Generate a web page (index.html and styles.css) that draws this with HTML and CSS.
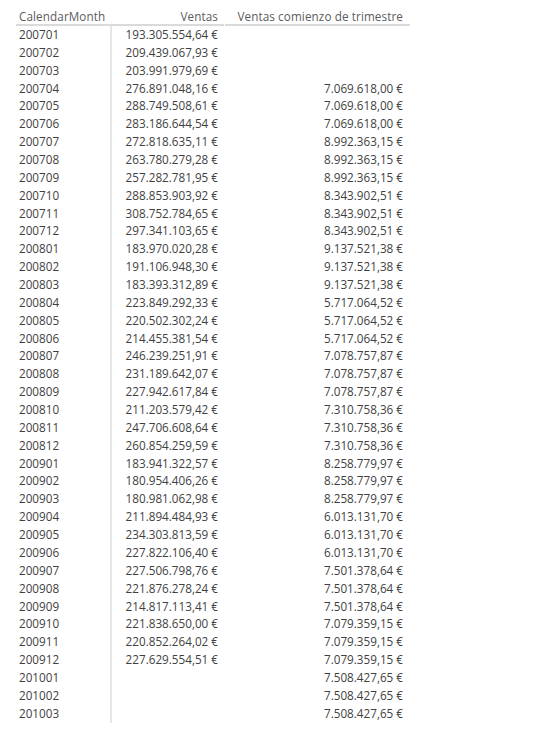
FILE: index.html
```html
<!DOCTYPE html>
<html lang="es">
<head>
    <meta charset="UTF-8">
    <title>Ventas por mes</title>
    <link rel="stylesheet" href="styles.css">
</head>
<body>
    <div class="sales-table">
        <div class="row head">
            <div class="cell month">CalendarMonth</div>
            <div class="cell num">Ventas</div>
            <div class="cell num quarter">Ventas comienzo de trimestre</div>
        </div>

        <div class="rows">
        <div class="row"><div class="cell month">200701</div><div class="cell num">193.305.554,64 €</div><div class="cell num quarter"></div></div>
        <div class="row"><div class="cell month">200702</div><div class="cell num">209.439.067,93 €</div><div class="cell num quarter"></div></div>
        <div class="row"><div class="cell month">200703</div><div class="cell num">203.991.979,69 €</div><div class="cell num quarter"></div></div>
        <div class="row"><div class="cell month">200704</div><div class="cell num">276.891.048,16 €</div><div class="cell num quarter">7.069.618,00 €</div></div>
        <div class="row"><div class="cell month">200705</div><div class="cell num">288.749.508,61 €</div><div class="cell num quarter">7.069.618,00 €</div></div>
        <div class="row"><div class="cell month">200706</div><div class="cell num">283.186.644,54 €</div><div class="cell num quarter">7.069.618,00 €</div></div>
        <div class="row"><div class="cell month">200707</div><div class="cell num">272.818.635,11 €</div><div class="cell num quarter">8.992.363,15 €</div></div>
        <div class="row"><div class="cell month">200708</div><div class="cell num">263.780.279,28 €</div><div class="cell num quarter">8.992.363,15 €</div></div>
        <div class="row"><div class="cell month">200709</div><div class="cell num">257.282.781,95 €</div><div class="cell num quarter">8.992.363,15 €</div></div>
        <div class="row"><div class="cell month">200710</div><div class="cell num">288.853.903,92 €</div><div class="cell num quarter">8.343.902,51 €</div></div>
        <div class="row"><div class="cell month">200711</div><div class="cell num">308.752.784,65 €</div><div class="cell num quarter">8.343.902,51 €</div></div>
        <div class="row"><div class="cell month">200712</div><div class="cell num">297.341.103,65 €</div><div class="cell num quarter">8.343.902,51 €</div></div>
        <div class="row"><div class="cell month">200801</div><div class="cell num">183.970.020,28 €</div><div class="cell num quarter">9.137.521,38 €</div></div>
        <div class="row"><div class="cell month">200802</div><div class="cell num">191.106.948,30 €</div><div class="cell num quarter">9.137.521,38 €</div></div>
        <div class="row"><div class="cell month">200803</div><div class="cell num">183.393.312,89 €</div><div class="cell num quarter">9.137.521,38 €</div></div>
        <div class="row"><div class="cell month">200804</div><div class="cell num">223.849.292,33 €</div><div class="cell num quarter">5.717.064,52 €</div></div>
        <div class="row"><div class="cell month">200805</div><div class="cell num">220.502.302,24 €</div><div class="cell num quarter">5.717.064,52 €</div></div>
        <div class="row"><div class="cell month">200806</div><div class="cell num">214.455.381,54 €</div><div class="cell num quarter">5.717.064,52 €</div></div>
        <div class="row"><div class="cell month">200807</div><div class="cell num">246.239.251,91 €</div><div class="cell num quarter">7.078.757,87 €</div></div>
        <div class="row"><div class="cell month">200808</div><div class="cell num">231.189.642,07 €</div><div class="cell num quarter">7.078.757,87 €</div></div>
        <div class="row"><div class="cell month">200809</div><div class="cell num">227.942.617,84 €</div><div class="cell num quarter">7.078.757,87 €</div></div>
        <div class="row"><div class="cell month">200810</div><div class="cell num">211.203.579,42 €</div><div class="cell num quarter">7.310.758,36 €</div></div>
        <div class="row"><div class="cell month">200811</div><div class="cell num">247.706.608,64 €</div><div class="cell num quarter">7.310.758,36 €</div></div>
        <div class="row"><div class="cell month">200812</div><div class="cell num">260.854.259,59 €</div><div class="cell num quarter">7.310.758,36 €</div></div>
        <div class="row"><div class="cell month">200901</div><div class="cell num">183.941.322,57 €</div><div class="cell num quarter">8.258.779,97 €</div></div>
        <div class="row"><div class="cell month">200902</div><div class="cell num">180.954.406,26 €</div><div class="cell num quarter">8.258.779,97 €</div></div>
        <div class="row"><div class="cell month">200903</div><div class="cell num">180.981.062,98 €</div><div class="cell num quarter">8.258.779,97 €</div></div>
        <div class="row"><div class="cell month">200904</div><div class="cell num">211.894.484,93 €</div><div class="cell num quarter">6.013.131,70 €</div></div>
        <div class="row"><div class="cell month">200905</div><div class="cell num">234.303.813,59 €</div><div class="cell num quarter">6.013.131,70 €</div></div>
        <div class="row"><div class="cell month">200906</div><div class="cell num">227.822.106,40 €</div><div class="cell num quarter">6.013.131,70 €</div></div>
        <div class="row"><div class="cell month">200907</div><div class="cell num">227.506.798,76 €</div><div class="cell num quarter">7.501.378,64 €</div></div>
        <div class="row"><div class="cell month">200908</div><div class="cell num">221.876.278,24 €</div><div class="cell num quarter">7.501.378,64 €</div></div>
        <div class="row"><div class="cell month">200909</div><div class="cell num">214.817.113,41 €</div><div class="cell num quarter">7.501.378,64 €</div></div>
        <div class="row"><div class="cell month">200910</div><div class="cell num">221.838.650,00 €</div><div class="cell num quarter">7.079.359,15 €</div></div>
        <div class="row"><div class="cell month">200911</div><div class="cell num">220.852.264,02 €</div><div class="cell num quarter">7.079.359,15 €</div></div>
        <div class="row"><div class="cell month">200912</div><div class="cell num">227.629.554,51 €</div><div class="cell num quarter">7.079.359,15 €</div></div>
        <div class="row"><div class="cell month">201001</div><div class="cell num"></div><div class="cell num quarter">7.508.427,65 €</div></div>
        <div class="row"><div class="cell month">201002</div><div class="cell num"></div><div class="cell num quarter">7.508.427,65 €</div></div>
        <div class="row"><div class="cell month">201003</div><div class="cell num"></div><div class="cell num quarter">7.508.427,65 €</div></div>
        </div>
    </div>
</body>
</html>
```

FILE: styles.css
```css
body {
    margin: 0;
    padding: 8px 0 0 16px;
    background: #ffffff;
    font-family: 'Open Sans', sans-serif;
    font-size: 11.7px;
    color: #3f3f3f;
}

.sales-table {
    width: 394px;
}

.rows {
    padding-top: 2px;
}

.rows .month {
    border-right: 2px solid #e6e6e6;
}

.row {
    display: grid;
    grid-template-columns: 96px 112px 186px;
    height: 17.86px;
    line-height: 17.86px;
}

.cell {
    white-space: nowrap;
}

.month {
    padding-left: 3px;
}

.num {
    text-align: right;
    padding-right: 6px;
}

.num.quarter {
    padding-right: 7px;
}

.row.head {
    height: 16px;
    line-height: 16px;
    color: #5c5c5c;
    letter-spacing: 0.1px;
}

.row.head .cell {
    border-bottom: 2px solid #dadada;
}

.row.head .quarter {
    margin-left: 1px;
}
```
